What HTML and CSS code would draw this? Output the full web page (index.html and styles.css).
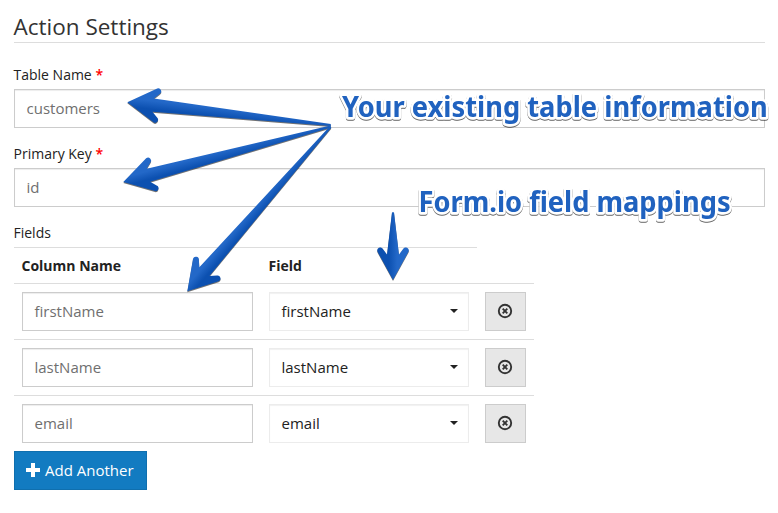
FILE: index.html
```html
<!DOCTYPE html>
<html lang="en">
<head>
<meta charset="utf-8">
<title>Action Settings</title>
<link rel="stylesheet" href="styles.css">
</head>
<body>
<form class="settings">
  <h1 class="legend">Action Settings</h1>
  <div class="group">
    <label class="label">Table Name <span class="required">*</span></label>
    <div class="control">customers</div>
  </div>
  <div class="group">
    <label class="label">Primary Key <span class="required">*</span></label>
    <div class="control">id</div>
  </div>
  <label class="label fields-label">Fields</label>
  <div class="mapping">
    <div class="row head"><span>Column Name</span><span>Field</span></div>
    <div class="row">
      <div class="control">firstName</div>
      <div class="select">firstName<i class="caret"></i></div>
      <button type="button" class="remove" aria-label="Remove"><svg width="16" height="16" viewBox="0 0 16 16"><circle cx="8" cy="8" r="6.2"/><path d="M5.7 5.7l4.6 4.6M10.3 5.7l-4.6 4.6"/></svg></button>
    </div>
    <div class="row">
      <div class="control">lastName</div>
      <div class="select">lastName<i class="caret"></i></div>
      <button type="button" class="remove" aria-label="Remove"><svg width="16" height="16" viewBox="0 0 16 16"><circle cx="8" cy="8" r="6.2"/><path d="M5.7 5.7l4.6 4.6M10.3 5.7l-4.6 4.6"/></svg></button>
    </div>
    <div class="row">
      <div class="control">email</div>
      <div class="select">email<i class="caret"></i></div>
      <button type="button" class="remove" aria-label="Remove"><svg width="16" height="16" viewBox="0 0 16 16"><circle cx="8" cy="8" r="6.2"/><path d="M5.7 5.7l4.6 4.6M10.3 5.7l-4.6 4.6"/></svg></button>
    </div>
  </div>
  <button type="button" class="add"><svg width="14" height="14" viewBox="0 0 14 14"><path d="M5 0h4v5h5v4H9v5H5V9H0V5h5z"/></svg><span>Add Another</span></button>
</form>
<svg class="notes" width="778" height="513" viewBox="0 0 778 513">
  <defs>
    <linearGradient id="shade" gradientUnits="userSpaceOnUse" x1="0" y1="-7" x2="0" y2="7">
      <stop offset="0.2" stop-color="#2368c8"/><stop offset="0.8" stop-color="#0c50b0"/>
    </linearGradient>
    <linearGradient id="shade-down" gradientUnits="userSpaceOnUse" x1="0" y1="-7" x2="0" y2="7">
      <stop offset="0.2" stop-color="#0c50b0"/><stop offset="0.8" stop-color="#2368c8"/>
    </linearGradient>
  </defs>
  <g class="arrows">
    <path fill="url(#shade)" transform="translate(127.3 102.3) rotate(6.4)" d="M0 0L28.2-17A3 3 0 0 1 31.3-11.9L26-6.7 204.7-1V1L26 6.7 31.3 11.9A3 3 0 0 1 28.2 17Z"/>
    <path fill="url(#shade)" transform="translate(123.3 182) rotate(-15)" d="M0 0L28.2-17A3 3 0 0 1 31.3-11.9L26-6.7 214.7-1V1L26 6.7 31.3 11.9A3 3 0 0 1 28.2 17Z"/>
    <path fill="url(#shade)" transform="translate(187.3 291.3) rotate(-48.9)" d="M0 0L28.2-17A3 3 0 0 1 31.3-11.9L26-6.7 218-1V1L26 6.7 31.3 11.9A3 3 0 0 1 28.2 17Z"/>
    <path fill="url(#shade-down)" transform="translate(393 280) rotate(-90)" d="M0 0L28.3-15.5A3 3 0 0 1 31.6-10.6L25.5-6 67.7-1V1L25.5 6 31.6 10.6A3 3 0 0 1 28.3 15.5Z"/>
  </g>
  <g class="captions">
    <text transform="translate(342 116.7) scale(0.996 1.055)">Your existing table information</text>
    <text transform="translate(418.5 212) scale(0.995 1.055)">Form.io field mappings</text>
  </g>
</svg>
</body>
</html>
```

FILE: styles.css
```css
* { box-sizing: border-box; }
body {
  margin: 0;
  height: 513px;
  overflow: hidden;
  background: #fff;
  color: #222;
  font: 15px/21px "Open Sans", "Noto Sans", sans-serif;
}
.settings { padding: 11px 13px 0 14px; }
.legend {
  margin: 0 0 22px;
  height: 32px;
  border-bottom: 1px solid #ddd;
  color: #333;
  font-size: 22.5px;
  font-weight: 400;
  line-height: 31px;
  text-indent: -0.5px;
}
.group { height: 79px; }
.label { display: block; height: 24px; font-size: 14px; line-height: 20px; text-indent: -0.5px; }
.required { color: #f00; font-weight: 600; }
.control, .select {
  height: 39px;
  padding: 8px 11.5px;
  border: 1px solid #ccc;
  background: #fff;
  box-shadow: inset 0 1px 1px rgba(0, 0, 0, .075);
  color: #6f6f6f;
}
.select {
  display: flex;
  align-items: center;
  justify-content: space-between;
  padding-right: 10px;
  border-color: #ececec;
  box-shadow: inset 0 1px 1px rgba(0, 0, 0, .06);
  color: #222;
}
.caret {
  margin-bottom: 2px;
  border: 4px solid transparent;
  border-top-color: #222;
  border-bottom: 0;
}
.mapping { width: 520px; margin-bottom: 8px; }
.fields-label { height: 24px; }
.row {
  display: grid;
  grid-template-columns: 231px 200px 41px;
  gap: 16px;
  height: 56px;
  padding: 8px 8px 0;
  border-top: 1px solid #ddd;
}
.row:last-child { height: 48px; }
.head {
  width: 463px;
  height: 36px;
  font-size: 14px;
  font-weight: 700;
  line-height: 20px;
  text-indent: -0.5px;
}
.remove {
  display: flex;
  align-items: center;
  justify-content: center;
  height: 39px;
  padding: 0 1px 2px 0;
  border: 1px solid #ccc;
  background: #e7e7e7;
}
.remove svg { fill: none; stroke: #333; stroke-width: 1.9; }
.add {
  display: flex;
  align-items: center;
  gap: 5px;
  width: 133px;
  height: 39px;
  padding: 0 11.5px 1px 11px;
  border: 1px solid #0f6fae;
  background: #127bc1;
  color: #fff;
  font: 500 15px/21px "Open Sans", sans-serif;
  white-space: nowrap;
}
.add svg { flex: none; fill: #fff; }
.notes { position: absolute; left: 0; top: 0; pointer-events: none; }
.arrows { filter: drop-shadow(0 1px 0.6px rgba(0, 0, 0, .55)); }
.captions {
  fill: #2062bf;
  stroke: #fff;
  stroke-width: 5px;
  stroke-linejoin: round;
  paint-order: stroke;
  font: 700 27.4px "Noto Sans", "Open Sans", sans-serif;
  filter: drop-shadow(0 1px 0.5px rgba(0, 0, 0, .6));
}
```
